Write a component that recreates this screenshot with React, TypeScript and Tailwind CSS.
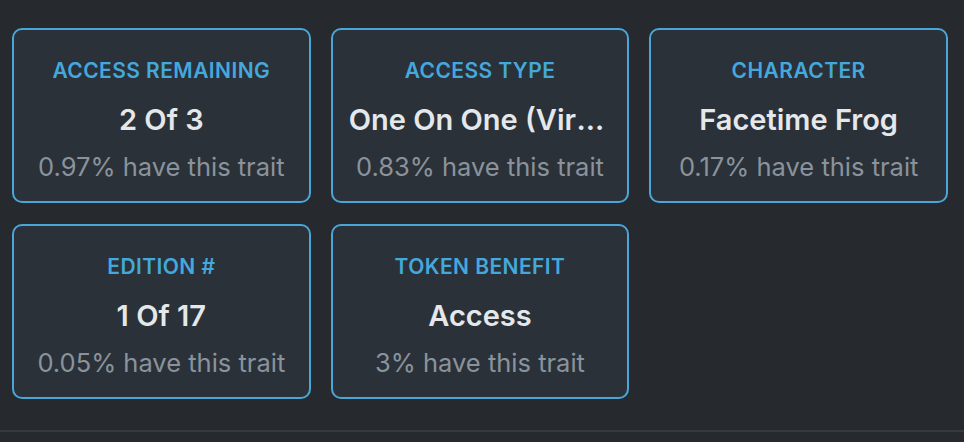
import React from 'react';

const traits = [
    { type: 'Access Remaining', value: '2 Of 3', rarity: '0.97% have this trait' },
    { type: 'Access Type', value: 'One On One (Virtual)', rarity: '0.83% have this trait' },
    { type: 'Character', value: 'Facetime Frog', rarity: '0.17% have this trait' },
    { type: 'Edition #', value: '1 Of 17', rarity: '0.05% have this trait' },
    { type: 'Token Benefit', value: 'Access', rarity: '3% have this trait' }
];

function TraitCard({ type, value, rarity }: { type: string; value: string; rarity: string }) {
    return (
        <div className="flex h-[175px] min-w-0 flex-col items-center rounded-[10px] border-2 border-[#4ba6d8] bg-[#2a3139] px-[16px] pt-[27px] text-center">
            <p className="w-full truncate text-[21px] font-semibold uppercase leading-[28px] tracking-[0.02em] text-[#45a8dc]">{type}</p>
            <p className="mt-[17px] w-full truncate text-[29px] font-semibold leading-[36px] text-[#e5e8eb]">{value}</p>
            <p className="mt-[13px] w-full truncate text-[25.5px] leading-[32px] text-[#8a939b]">{rarity}</p>
        </div>
    );
}

export default function App() {
    return (
        <div className="h-[442px] w-[964px] overflow-hidden bg-[#262a2f] font-['Inter',sans-serif]">
            <div className="grid grid-cols-3 gap-x-[20px] gap-y-[21px] pl-[12px] pr-[16px] pt-[28px]">
                {traits.map((t) => (
                    <TraitCard key={t.type} {...t} />
                ))}
            </div>
            <div className="mt-[31px] border-t-2 border-[#353a40]" />
        </div>
    );
}
